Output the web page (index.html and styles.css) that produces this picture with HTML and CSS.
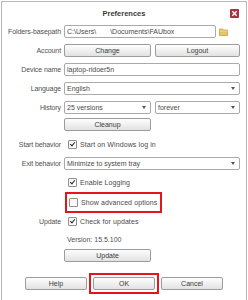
FILE: index.html
```html
<!DOCTYPE html>
<html lang="en">
<head>
    <meta charset="UTF-8">
    <title>Preferences</title>
    <link rel="stylesheet" href="styles.css">
</head>
<body>
    <div class="dialog">
        <div class="titlebar">
            <span></span>
            <h1>Preferences</h1>
            <span class="close">
                <svg width="9" height="9" viewBox="0 0 9 9">
                    <rect x="0" y="0" width="9" height="9" rx="1" fill="#a8323f"/>
                    <path d="M2.3 2.3 L6.7 6.7 M6.7 2.3 L2.3 6.7" stroke="#fff" stroke-width="1.4"/>
                </svg>
            </span>
        </div>

        <div class="row">
            <label>Folders-basepath</label>
            <div class="path">
                <div class="input">C:\Users\<span class="gap">\Documents\FAUbox</span></div>
                <svg class="folder" width="9" height="8" viewBox="0 0 9 8">
                    <path d="M0.5 1 H3.5 L4.3 2 H8.5 V7.5 H0.5 Z" fill="#e9c463" stroke="#c9a03c" stroke-width="0.8"/>
                    <path d="M0.5 3.2 H8.5" stroke="#f6dc8c" stroke-width="0.8"/>
                </svg>
            </div>
        </div>

        <div class="row">
            <label>Account</label>
            <div class="half">
                <button class="btn">Change</button>
                <button class="btn">Logout</button>
            </div>
        </div>

        <div class="row">
            <label>Device name</label>
            <div class="input">laptop-ridoer5n</div>
        </div>

        <div class="row">
            <label>Language</label>
            <div class="input select">English<span class="arrow"></span></div>
        </div>

        <div class="row">
            <label>History</label>
            <div class="half">
                <div class="input select">25 versions<span class="arrow"></span></div>
                <div class="input select">forever<span class="arrow"></span></div>
            </div>
        </div>

        <div class="row short">
            <span></span>
            <div class="half">
                <button class="btn">Cleanup</button>
            </div>
        </div>

        <div class="row spaced">
            <label>Start behavior</label>
            <div class="check"><span class="box checked"></span>Start on Windows log in</div>
        </div>

        <div class="row">
            <label>Exit behavior</label>
            <div class="input select">Minimize to system tray<span class="arrow"></span></div>
        </div>

        <div class="row">
            <span></span>
            <div class="check"><span class="box checked"></span>Enable Logging</div>
        </div>

        <div class="row tall">
            <span></span>
            <div><div class="check marked"><span class="box"></span>Show advanced options</div></div>
        </div>

        <div class="row">
            <label>Update</label>
            <div class="check"><span class="box checked"></span>Check for updates</div>
        </div>

        <div class="row version">
            <span></span>
            <div class="version-text">Version: 15.5.100</div>
        </div>

        <div class="row short">
            <span></span>
            <div class="half">
                <button class="btn">Update</button>
            </div>
        </div>

        <div class="actions">
            <button class="btn wide">Help</button>
            <span class="frame"><button class="btn wide">OK</button></span>
            <button class="btn wide">Cancel</button>
        </div>
    </div>
</body>
</html>
```

FILE: styles.css
```css
body {
    margin: 0;
    background: #fff;
    font-family: "Liberation Sans", Arial, sans-serif;
    font-size: 7px;
    color: #4a4a4a;
}

.dialog {
    margin: 1px 1px 0;
    height: 299px;
    border: 1px solid #b8b8b8;
    border-bottom: none;
    box-sizing: border-box;
}

.titlebar {
    height: 20px;
    display: grid;
    grid-template-columns: 1fr auto 1fr;
    align-items: center;
}

h1 {
    margin: 2px 0 0;
    font-size: 7.5px;
    font-weight: bold;
    color: #3a3a3a;
}

.close {
    justify-self: end;
    margin: 3px 7px 0 0;
    height: 9px;
}

.close svg {
    display: block;
}

.row {
    display: grid;
    grid-template-columns: 60px 176px;
    column-gap: 2px;
    height: 19px;
    align-items: center;
}

.row.short {
    height: 14px;
}

.row.spaced {
    margin-top: 4px;
}

.row.tall {
    height: 20px;
}

.row.version {
    height: 17px;
}

label {
    text-align: right;
    padding-right: 1px;
    color: #505050;
    white-space: nowrap;
    letter-spacing: -0.1px;
}

.input {
    height: 13px;
    border: 1px solid #aaa;
    border-radius: 2px;
    padding: 0 2px;
    box-sizing: border-box;
    line-height: 11px;
    background: #fff;
    white-space: nowrap;
    overflow: hidden;
}

.select {
    display: flex;
    align-items: center;
}

.arrow {
    margin-left: auto;
    margin-right: 2px;
    width: 0;
    height: 0;
    border-left: 2.5px solid transparent;
    border-right: 2.5px solid transparent;
    border-top: 3px solid #555;
}

.path {
    display: flex;
    align-items: center;
}

.path .input {
    width: 152px;
}

.gap {
    margin-left: 14px;
}

.folder {
    margin-left: 3px;
}

.half {
    display: grid;
    grid-template-columns: 87px 85px;
    column-gap: 4px;
}

.btn {
    height: 13px;
    padding: 0;
    border: 1px solid #9c9c9c;
    border-radius: 2px;
    background: linear-gradient(#fefefe, #e2e2e2);
    font: inherit;
    color: #3a3a3a;
}

.check {
    display: flex;
    align-items: center;
    gap: 3px;
    margin-left: 4px;
    white-space: nowrap;
    letter-spacing: 0.1px;
}

.box {
    width: 9px;
    height: 9px;
    border: 1px solid #8f8f8f;
    border-radius: 1px;
    box-sizing: border-box;
    background: linear-gradient(#f4f4f4, #fff);
    display: flex;
    align-items: center;
    justify-content: center;
}

.box.checked::after {
    content: "";
    width: 4px;
    height: 2px;
    margin-top: -2px;
    border-left: 1.5px solid #2a2a2a;
    border-bottom: 1.5px solid #2a2a2a;
    transform: rotate(-50deg);
}

.check.marked {
    display: inline-flex;
    height: 21px;
    box-sizing: border-box;
    margin-left: 1px;
    padding: 0 3px 0 2px;
    border: 2px solid #e8141c;
}

.version-text {
    margin-left: 3px;
    color: #505050;
}

.actions {
    margin-top: 15px;
    display: flex;
    justify-content: center;
    gap: 6px;
}

.btn.wide {
    width: 62px;
}

.frame {
    display: flex;
    margin: -4px;
    padding: 2px;
    border: 2px solid #e8141c;
}
```
